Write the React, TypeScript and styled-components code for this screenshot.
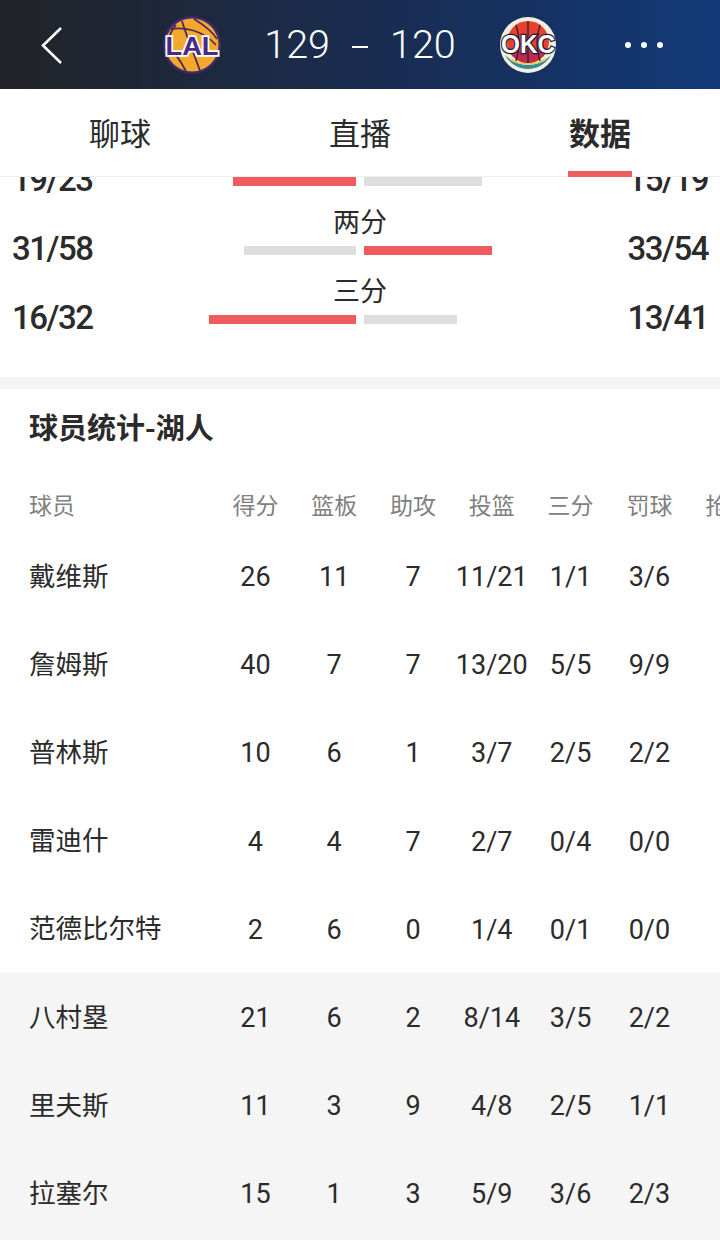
import React from "react";
import styled, { createGlobalStyle } from "styled-components";

const CJK = `"Noto Sans CJK SC", "Noto Sans", sans-serif`;
const NUM = `Roboto, "Noto Sans CJK SC", sans-serif`;

const GlobalStyle = createGlobalStyle`
  html, body {
    margin: 0;
    padding: 0;
    background: #fff;
  }
`;

const Page = styled.div`
  width: 720px;
  height: 1240px;
  overflow: hidden;
  display: flex;
  flex-direction: column;
  font-family: ${CJK};
  color: #2b2b2b;
  background: #fff;
`;

const Header = styled.header`
  height: 89px;
  flex: none;
  display: grid;
  grid-template-columns: 162px 60px 278px 56px 1fr;
  align-items: center;
  background: linear-gradient(90deg, #222327 0%, #1c2a44 35%, #16305f 70%, #123a78 100%);
  color: #fff;
`;

const BackCell = styled.div`
  padding-left: 41px;
  display: flex;
`;

const Score = styled.div`
  display: flex;
  justify-content: center;
  align-items: center;
  gap: 22px;
  font-family: Roboto, sans-serif;
  font-weight: 300;
  font-size: 39.5px;
  line-height: 48px;
  padding-right: 2px;
`;

const ScoreDash = styled.span`
  width: 16px;
  height: 2px;
  margin-top: 4px;
  background: #fff;
`;

const Dots = styled.div`
  display: flex;
  justify-content: center;
  gap: 10px;
  padding-left: 11px;
`;

const Dot = styled.span`
  width: 6px;
  height: 6px;
  border-radius: 50%;
  background: #fff;
`;

const Tabs = styled.nav`
  height: 88px;
  flex: none;
  display: grid;
  grid-template-columns: repeat(3, 240px);
  border-bottom: 1px solid #efefef;
  box-sizing: border-box;
  background: #fff;
  position: relative;
  z-index: 2;
`;

const Tab = styled.div<{ $active?: boolean }>`
  position: relative;
  display: flex;
  align-items: center;
  justify-content: center;
  padding-bottom: 2px;
  font-size: 31px;
  font-weight: ${(p) => (p.$active ? 700 : 400)};
  color: #2b2b2b;

  ${(p) =>
    p.$active &&
    `&::after {
      content: "";
      position: absolute;
      left: 88px;
      bottom: -1px;
      width: 64px;
      height: 6px;
      background: #ee5c60;
    }`}
`;

const Compare = styled.section`
  height: 245px;
  flex: none;
  margin-top: -45px;
  overflow: hidden;
`;

const CompareRow = styled.div`
  height: 69px;
  display: grid;
  grid-template-columns: 106px 1fr 106px;
`;

const SideValue = styled.div<{ $right?: boolean }>`
  font-family: ${NUM};
  font-size: 33px;
  letter-spacing: -1.5px;
  font-weight: 500;
  line-height: 36px;
  padding-top: 30px;
  text-align: ${(p) => (p.$right ? "right" : "left")};
  padding-left: ${(p) => (p.$right ? 0 : "12px")};
  padding-right: ${(p) => (p.$right ? "12px" : 0)};
  white-space: nowrap;
`;

const CompareMid = styled.div`
  display: flex;
  flex-direction: column;
  align-items: center;
`;

const CompareLabel = styled.div`
  height: 38px;
  font-size: 27px;
  line-height: 40px;
`;

const Bars = styled.div`
  width: 100%;
  display: grid;
  grid-template-columns: 1fr 1fr;
  gap: 8px;
  padding-top: 7px;
`;

const Bar = styled.div<{ $hot?: boolean; $left?: boolean }>`
  height: 9px;
  background: ${(p) => (p.$hot ? "#ee5c60" : "#dedede")};
  justify-self: ${(p) => (p.$left ? "end" : "start")};
`;

const Divider = styled.div`
  height: 12px;
  flex: none;
  background: #f4f4f4;
`;

const Section = styled.section`
  flex: 1;
  min-height: 0;
  overflow: hidden;
  background: #f5f5f5;
`;

const SectionTitle = styled.h2`
  margin: 0;
  padding: 16px 0 0 29px;
  height: 67px;
  box-sizing: border-box;
  font-size: 29px;
  line-height: 42px;
  font-weight: 700;
  color: #2b2b2b;
  background: #fff;
`;

const TableRow = styled.div<{ $bench?: boolean }>`
  height: 88.2px;
  display: grid;
  grid-template-columns: 216px repeat(7, 78.8px);
  align-items: center;
  background: ${(p) => (p.$bench ? "#f5f5f5" : "#fff")};
  color: #2b2b2b;
  font-size: 27px;
  white-space: nowrap;
`;

const HeadRow = styled(TableRow)`
  height: 76px;
  box-sizing: border-box;
  padding-top: 19px;
  color: #808080;
  font-size: 23px;
`;

const NameCell = styled.div`
  padding-left: 29px;
  padding-bottom: 3px;
  line-height: 32px;
  font-size: 26.5px;
`;

const HeadCell = styled.div`
  text-align: center;
  line-height: 32px;
`;

const HeadName = styled(HeadCell)`
  text-align: left;
  padding-left: 29px;
`;

const Cell = styled.div`
  text-align: center;
  font-family: ${NUM};
  line-height: 36px;
  padding-top: 2px;
`;

function BackIcon() {
  return (
    <svg width="22" height="38" viewBox="0 0 22 38" fill="none">
      <path d="M20 2 L2 19.5 L20 37" stroke="#fff" strokeWidth="2.6" />
    </svg>
  );
}

function LakersLogo() {
  return (
    <svg width="60" height="60" viewBox="0 0 60 60">
      <circle cx="30" cy="30" r="29" fill="#43286e" />
      <circle cx="30" cy="30" r="26.5" fill="#f3a92c" />
      <g fill="none" stroke="#4d2a5e" strokeWidth="1.8">
        <path d="M20 6 C24 20 34 44 38 56" />
        <path d="M9 14 C20 12 40 14 54 30" />
        <path d="M14 10 C6 18 8 26 5 28" />
        <path d="M12 38 C18 44 20 50 24 56" />
        <path d="M32 4 C42 10 50 16 55 24" />
      </g>
      <text
        x="30"
        y="39.5"
        textAnchor="middle"
        fontFamily="Liberation Sans, sans-serif"
        fontWeight="700"
        fontSize="26"
        fill="#4b2a86"
        stroke="#fff"
        strokeWidth="3.5"
        paintOrder="stroke"
        textLength="53"
        lengthAdjust="spacingAndGlyphs"
      >
        LAL
      </text>
    </svg>
  );
}

function ThunderLogo() {
  return (
    <svg width="56" height="60" viewBox="0 0 56 60">
      <circle cx="28" cy="30" r="28" fill="#f6efe0" />
      <path d="M5 40 A 26 26 0 0 0 51 40 L 44 46 Q28 54 12 46 Z" fill="#2f8f9f" />
      <path d="M10 44 Q28 54 46 44" fill="none" stroke="#f1c84a" strokeWidth="2" />
      <circle cx="28" cy="27" r="21" fill="#e8402f" />
      <path d="M9 36 A 21 21 0 0 0 47 36 Z" fill="#bf2b4d" />
      <g fill="none" stroke="#3a1f3a" strokeWidth="1.4">
        <path d="M28 6 V48" />
        <path d="M16 10 Q22 28 16 46" />
        <path d="M40 10 Q34 28 40 46" />
      </g>
      <text
        x="28"
        y="38"
        textAnchor="middle"
        fontFamily="Liberation Sans, sans-serif"
        fontWeight="700"
        fontSize="25"
        fill="#fff"
        stroke="#131c3c"
        strokeWidth="2.4"
        paintOrder="stroke"
        textLength="54"
        lengthAdjust="spacingAndGlyphs"
      >
        OKC
      </text>
    </svg>
  );
}

const compareRows = [
  { label: "", left: "19/23", right: "15/19", lw: 123, rw: 118, leftHot: true },
  { label: "两分", left: "31/58", right: "33/54", lw: 112, rw: 128, leftHot: false },
  { label: "三分", left: "16/32", right: "13/41", lw: 147, rw: 93, leftHot: true },
];

const columns = ["得分", "篮板", "助攻", "投篮", "三分", "罚球", "抢断"];

type Player = { name: string; stats: string[]; bench?: boolean };

const players: Player[] = [
  { name: "戴维斯", stats: ["26", "11", "7", "11/21", "1/1", "3/6"] },
  { name: "詹姆斯", stats: ["40", "7", "7", "13/20", "5/5", "9/9"] },
  { name: "普林斯", stats: ["10", "6", "1", "3/7", "2/5", "2/2"] },
  { name: "雷迪什", stats: ["4", "4", "7", "2/7", "0/4", "0/0"] },
  { name: "范德比尔特", stats: ["2", "6", "0", "1/4", "0/1", "0/0"] },
  { name: "八村塁", stats: ["21", "6", "2", "8/14", "3/5", "2/2"], bench: true },
  { name: "里夫斯", stats: ["11", "3", "9", "4/8", "2/5", "1/1"], bench: true },
  { name: "拉塞尔", stats: ["15", "1", "3", "5/9", "3/6", "2/3"], bench: true },
];

export default function App() {
  return (
    <Page>
      <GlobalStyle />
      <Header>
        <BackCell>
          <BackIcon />
        </BackCell>
        <LakersLogo />
        <Score>
          <span>129</span>
          <ScoreDash />
          <span>120</span>
        </Score>
        <ThunderLogo />
        <Dots>
          <Dot />
          <Dot />
          <Dot />
        </Dots>
      </Header>
      <Tabs>
        <Tab>聊球</Tab>
        <Tab>直播</Tab>
        <Tab $active>数据</Tab>
      </Tabs>
      <Compare>
        {compareRows.map((r) => (
          <CompareRow key={r.left}>
            <SideValue>{r.left}</SideValue>
            <CompareMid>
              <CompareLabel>{r.label}</CompareLabel>
              <Bars>
                <Bar $left $hot={r.leftHot} style={{ width: r.lw }} />
                <Bar $hot={!r.leftHot} style={{ width: r.rw }} />
              </Bars>
            </CompareMid>
            <SideValue $right>{r.right}</SideValue>
          </CompareRow>
        ))}
      </Compare>
      <Divider />
      <Section>
        <SectionTitle>球员统计-湖人</SectionTitle>
        <HeadRow>
          <HeadName>球员</HeadName>
          {columns.map((c) => (
            <HeadCell key={c}>{c}</HeadCell>
          ))}
        </HeadRow>
        {players.map((p) => (
          <TableRow key={p.name} $bench={p.bench}>
            <NameCell>{p.name}</NameCell>
            {p.stats.map((s, i) => (
              <Cell key={i}>{s}</Cell>
            ))}
          </TableRow>
        ))}
      </Section>
    </Page>
  );
}
